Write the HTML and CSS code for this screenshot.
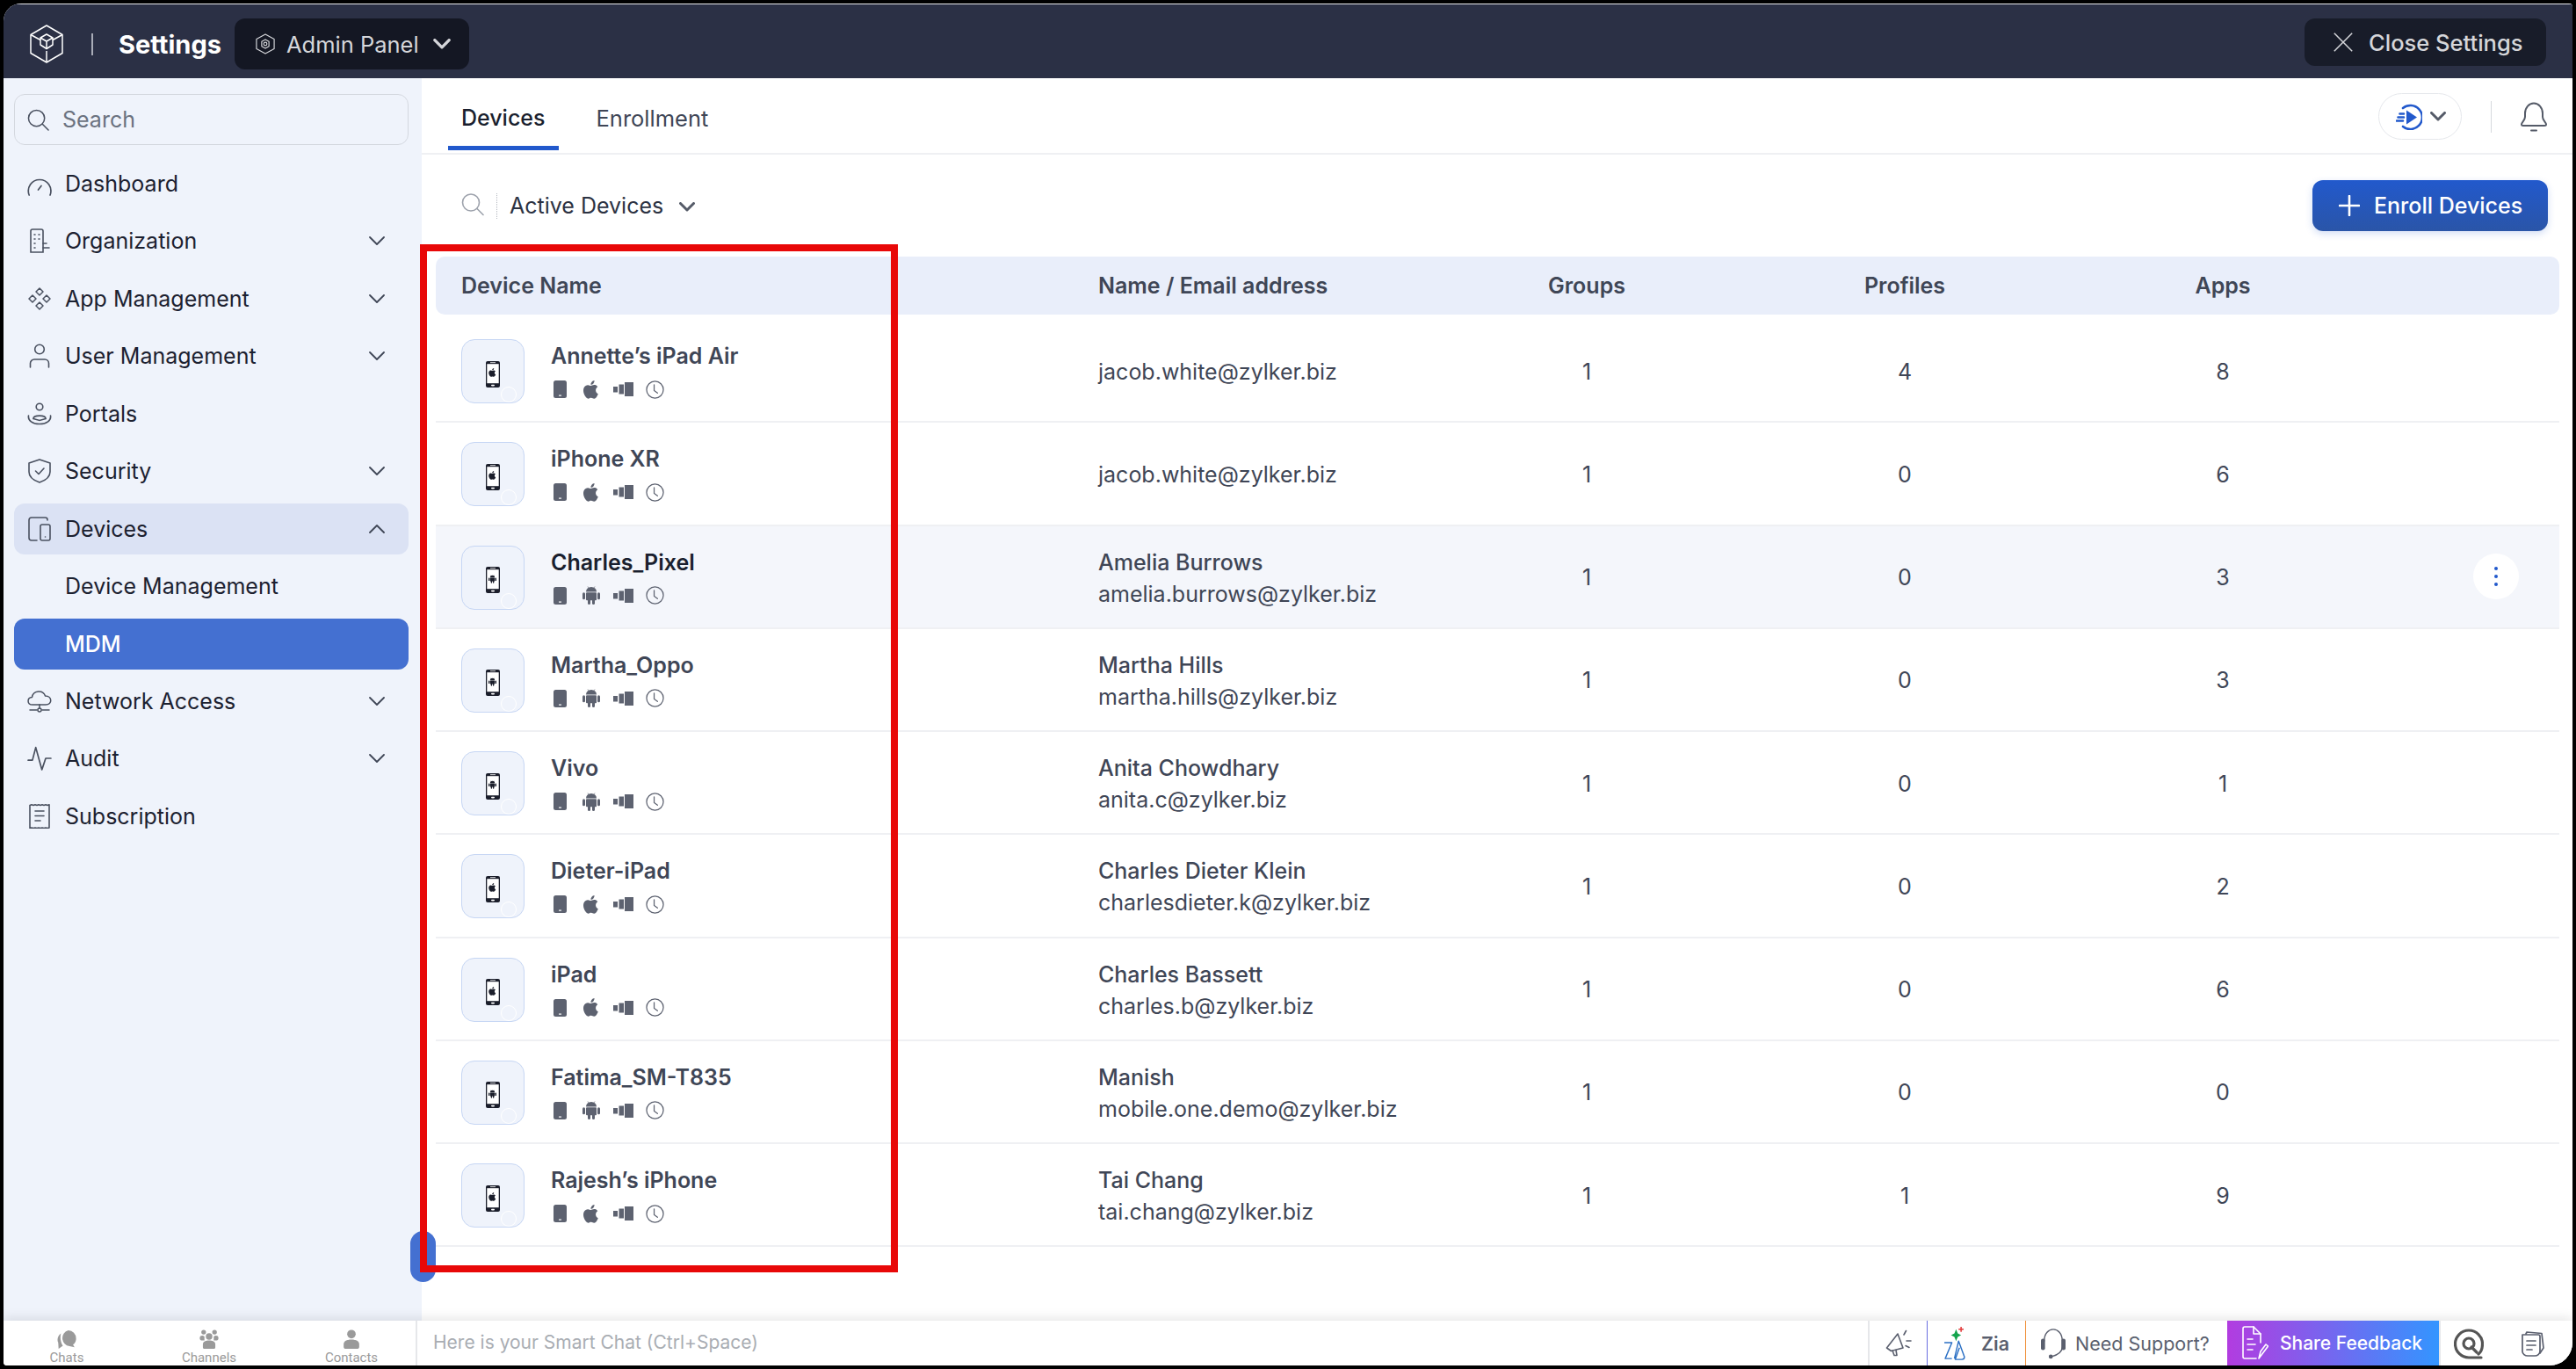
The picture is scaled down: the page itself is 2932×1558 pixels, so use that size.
FILE: index.html
```html
<!DOCTYPE html>
<html lang="en">
<head>
<meta charset="utf-8">
<title>Settings - MDM Devices</title>
<link rel="stylesheet" href="styles.css">
</head>
<body>
<svg class="defs" xmlns="http://www.w3.org/2000/svg">
  <defs>
    <symbol id="i-logo" viewBox="0 0 38 44"><g fill="none" stroke="currentColor" stroke-width="1.5" stroke-linejoin="round"><path d="M19 1 37 11.500V32.500L19 43 1 32.500V11.500Z"/><path d="M1 11.500 12 17.500M37 11.500 26 17.500M19 43V30"/><path d="M19 11 26 15V23L19 27.500 12 23V15Z"/><path d="M12 15 19 19 26 15M19 19V27.500"/></g></symbol>
    <symbol id="i-gearhex" viewBox="0 0 24 26"><g fill="none" stroke="currentColor" stroke-width="1.300" stroke-linejoin="round"><path d="M12 1 23 7V19L12 25 1 19V7Z"/><path d="M12 7.500 16.500 10V16L12 18.500 7.500 16V10Z"/><circle cx="12" cy="13" r="2"/></g></symbol>
    <symbol id="i-search" viewBox="0 0 26 26"><g fill="none" stroke="currentColor" stroke-width="1.600" stroke-linecap="round"><circle cx="11" cy="11" r="9.500"/><path d="M18 18 25 25"/></g></symbol>
    <symbol id="i-gauge" viewBox="0 0 28 20"><g fill="none" stroke="currentColor" stroke-width="1.700" stroke-linecap="round"><path d="M2.200 19A12.800 12.800 0 1 1 26 19"/><path d="M12.500 13 16 8.500"/></g></symbol>
    <symbol id="i-building" viewBox="0 0 24 28"><g fill="none" stroke="currentColor" stroke-width="1.600" stroke-linecap="round"><path d="M2 27V3A2 2 0 0 1 4 1H14A2 2 0 0 1 16 3V27H2Z"/><path d="M6 7H7M11 7H12M6 12H7M11 12H12M6 17H7M6 22H7M16 17H20M16 22H23"/></g></symbol>
    <symbol id="i-apps" viewBox="0 0 26 26"><g fill="none" stroke="currentColor" stroke-width="1.500" stroke-linejoin="round"><path d="M13 1 17 5 13 9 9 5ZM5 9 9 13 5 17 1 13ZM21 9 25 13 21 17 17 13ZM13 17 17 21 13 25 9 21Z"/></g></symbol>
    <symbol id="i-user" viewBox="0 0 24 28"><g fill="none" stroke="currentColor" stroke-width="1.600" stroke-linecap="round"><circle cx="12" cy="6.500" r="5.300"/><path d="M1.500 27V22.500A4.500 4.500 0 0 1 6 18H18A4.500 4.500 0 0 1 22.500 22.500V27"/></g></symbol>
    <symbol id="i-portal" viewBox="0 0 28 26"><g fill="none" stroke="currentColor" stroke-width="1.600" stroke-linecap="round"><circle cx="14" cy="5" r="3.800"/><path d="M7 18.500C7 14 21 14 21 18.500"/><path d="M1.500 15C.5 20.500 6 24.500 14 24.500S27.500 20.500 26.500 15"/><path d="M7 18.500 14 20.500 21 18.500"/></g></symbol>
    <symbol id="i-shield" viewBox="0 0 26 28"><g fill="none" stroke="currentColor" stroke-width="1.600" stroke-linecap="round" stroke-linejoin="round"><path d="M13 1 25 5V15C25 21 19 25 13 27 7 25 1 21 1 15V5Z"/><path d="M8.500 14 12 17.500 18 11"/></g></symbol>
    <symbol id="i-devices" viewBox="0 0 26 28"><g fill="none" stroke="currentColor" stroke-width="1.600" stroke-linecap="round"><path d="M22 4V3.500A2.500 2.500 0 0 0 19.500 1H4A3 3 0 0 0 1 4V24A3 3 0 0 0 4 27H10"/><rect x="14" y="9" width="11" height="18" rx="2"/><path d="M19.500 23H19.600"/></g></symbol>
    <symbol id="i-cloud" viewBox="0 0 28 26"><g fill="none" stroke="currentColor" stroke-width="1.500" stroke-linecap="round" stroke-linejoin="round"><path d="M7 17H6C-.5 17-.5 9 5.500 8.500 6.500 .5 18 -.5 20.500 7 28.500 7 29 17 21 17H7Z"/><path d="M14 17V21M3 23H11M17 23H25"/><circle cx="14" cy="23" r="2"/></g></symbol>
    <symbol id="i-pulse" viewBox="0 0 26 26"><path d="M1 15H5.500L9 1.500 15.500 25 19.500 13H25" fill="none" stroke="currentColor" stroke-width="1.600" stroke-linecap="round" stroke-linejoin="round"/></symbol>
    <symbol id="i-receipt" viewBox="0 0 24 28"><g fill="none" stroke="currentColor" stroke-width="1.600" stroke-linecap="round"><path d="M1 1.500 3 .8 5 1.500 7 .8 9 1.500 11 .8 13 1.500 15 .8 17 1.500 19 .8 21 1.500 23 .8V27 L21 27.500 19 27 17 27.500 15 27 13 27.500 11 27 9 27.500 7 27 5 27.500 3 27 1 27.500Z" stroke-linejoin="round"/><path d="M7 8H17M7 13.500H17M7 19H13"/></g></symbol>
    <symbol id="i-chev" viewBox="0 0 18 10"><path d="M1 1 9 9 17 1" fill="none" stroke="currentColor" stroke-width="1.800" stroke-linecap="round" stroke-linejoin="round"/></symbol>
    <symbol id="i-chevb" viewBox="0 0 18 11"><path d="M1.500 1.500 9 9 16.500 1.500" fill="none" stroke="currentColor" stroke-width="3" stroke-linecap="round" stroke-linejoin="round"/></symbol>
    <symbol id="i-close" viewBox="0 0 22 22"><path d="M.8.800 21.200 21.200M21.200.8.800 21.200" fill="none" stroke="currentColor" stroke-width="1.500"/></symbol>
    <symbol id="i-plus" viewBox="0 0 24 24"><path d="M12 1V23M1 12H23" fill="none" stroke="currentColor" stroke-width="2.600" stroke-linecap="round"/></symbol>
    <symbol id="i-play" viewBox="0 0 30 30"><g fill="none" stroke="currentColor" stroke-width="2.600" stroke-linecap="round"><path d="M8 5A13.500 13.500 0 1 1 8 26"/><path d="M4.500 11.500H9M2.500 15.500H9M1 19.500H8"/></g><path d="M12 7.500 24 15.500 12 23.500Z" fill="currentColor"/></symbol>
    <symbol id="i-bell" viewBox="0 0 30 34"><g fill="none" stroke="currentColor" stroke-width="2" stroke-linecap="round" stroke-linejoin="round"><path d="M5 17V13A10 11.500 0 0 1 25 13V17C25 21 29 23 29 25.500 29 26.500 28 27 27 27H3C2 27 1 26.500 1 25.500 1 23 5 21 5 17Z"/><path d="M12 32.500H18"/></g></symbol>
    <symbol id="i-tablet" viewBox="0 0 15 20"><rect width="15" height="20" rx="2.500" fill="currentColor"/><rect x="6" y="16.500" width="3" height="1.200" fill="#fff"/></symbol>
    <symbol id="i-apple" viewBox="2.500 1.500 19 21"><path fill="currentColor" d="M17.050 12.540c-.03-2.600 2.130-3.850 2.220-3.910-1.210-1.770-3.100-2.010-3.770-2.040-1.600-.16-3.130.94-3.950.94-.81 0-2.070-.92-3.400-.89-1.750.03-3.360 1.020-4.260 2.580-1.820 3.150-.47 7.820 1.300 10.380.87 1.250 1.900 2.650 3.250 2.600 1.310-.05 1.800-.84 3.380-.84 1.570 0 2.020.84 3.400.82 1.400-.03 2.290-1.270 3.150-2.530.99-1.450 1.400-2.860 1.420-2.930-.03-.01-2.720-1.040-2.740-4.180zM14.460 4.900c.72-.87 1.200-2.080 1.070-3.290-1.030.04-2.290.69-3.030 1.550-.66.77-1.240 2-1.090 3.180 1.150.09 2.330-.58 3.050-1.440z"/></symbol>
    <symbol id="i-android" viewBox="0 0 20 21"><g fill="currentColor"><path d="M4 6.500A6 5.500 0 0 1 16 6.500Z"/><rect x="4" y="7.200" width="12" height="9" rx="1"/><rect x="0" y="7.200" width="3" height="8" rx="1.500"/><rect x="17" y="7.200" width="3" height="8" rx="1.500"/><rect x="6" y="14" width="3" height="7" rx="1.500"/><rect x="11" y="14" width="3" height="7" rx="1.500"/></g><path d="M6 .5 7.500 2.500M14 .5 12.500 2.500" stroke="currentColor" stroke-width=".7"/></symbol>
    <symbol id="i-signal" viewBox="0 0 23 16"><g fill="currentColor"><rect x="0" y="5" width="5" height="6.500"/><rect x="6.500" y="2.500" width="5.500" height="11"/><rect x="13" y="0" width="10" height="16"/></g></symbol>
    <symbol id="i-clock" viewBox="0 0 22 22"><g fill="none" stroke="currentColor" stroke-width="1.300" stroke-linecap="round"><circle cx="11" cy="11" r="10"/><path d="M10 5V12L14 15"/></g></symbol>
    <symbol id="i-phone" viewBox="0 0 16 30"><rect width="16" height="30" rx="2" fill="#1b1e2b"/><rect x="1.300" y="3.200" width="13.400" height="22" fill="#fff"/><rect x="5" y="1.300" width="6" height=".8" fill="#fff"/><rect x="6" y="26.800" width="4" height="1.600" rx=".8" fill="#fff"/></symbol>
    <symbol id="i-chats" viewBox="0 0 26 26"><g fill="currentColor"><path d="M15 1A10.500 10.500 0 0 1 25 11.500C25 15 23.500 18 21 19.500L23 23 16.500 21.500A10.500 10.500 0 0 1 15 1Z"/><path d="M5.500 5C1.500 8 0 13 2 17L2.500 25 8 21C5 17 4 10 5.500 5Z"/></g></symbol>
    <symbol id="i-channels" viewBox="0 0 24 26"><g fill="currentColor"><circle cx="5" cy="3.500" r="3"/><circle cx="19" cy="3.500" r="3"/><circle cx="12" cy="9" r="4.200"/><path d="M0 11C0 7.500 4 7.500 6 9L6 14H2C.5 14 0 12.500 0 11ZM24 11C24 7.500 20 7.500 18 9L18 14H22C23.500 14 24 12.500 24 11Z"/><path d="M4 19C4 15 8 14 12 14S20 15 20 19V23C20 24.500 19 25 18 25H6C5 25 4 24.500 4 23Z"/></g></symbol>
    <symbol id="i-contacts" viewBox="0 0 20 26"><g fill="currentColor"><circle cx="10" cy="6" r="5.500"/><path d="M0 19C0 15 4 13 10 13S20 15 20 19V22C20 24 19 25 17 25H3C1 25 0 24 0 22Z"/></g></symbol>
    <symbol id="i-mega" viewBox="0 0 30 32"><g fill="none" stroke="currentColor" stroke-width="1.600" stroke-linecap="round" stroke-linejoin="round"><path d="M1.500 21 14 5 20 21 6.500 24.500Z"/><path d="M8 24 10 29.500H13L12 23.500"/><path d="M21 6 23.500 1.500M24 13H29M23 18.500 27 20.500"/></g></symbol>
    <symbol id="i-zia" viewBox="0 0 26 42"><path d="M1 20H10L2 39H10M13 39 18 18 25 37 C25 39 24 40 22 40H14L19 26" fill="none" stroke="#2a6fc4" stroke-width="1.500" stroke-linejoin="round"/><path d="M15 4 17 9 21 11 17 13 15 18 13 13 9 11 13 9Z" fill="#14a44d"/><path d="M21 1V7M18 4H24" stroke="#e23b3b" stroke-width="1.600"/></symbol>
    <symbol id="i-headset" viewBox="0 0 30 38"><g fill="none" stroke="currentColor" stroke-width="1.500" stroke-linecap="round"><path d="M4 16C4 -3 26 -3 26 16V23C26 29 20 33 13 35"/></g><g fill="currentColor"><rect x="0" y="13" width="5" height="14" rx="2.500"/><rect x="25" y="13" width="5" height="14" rx="2.500"/><circle cx="12" cy="35" r="2.500"/></g></symbol>
    <symbol id="i-doc" viewBox="0 0 30 40"><g fill="none" stroke="currentColor" stroke-width="1.600" stroke-linecap="round" stroke-linejoin="round"><path d="M16 37H3A2 2 0 0 1 1 35V3A2 2 0 0 1 3 1H13L21 9V19"/><path d="M13 1V9H21"/><path d="M6 15H12M6 21H15M6 27H12"/><path d="M19 37 21 29 27 21 29.500 23 23.500 31Z"/></g></symbol>
    <symbol id="i-q" viewBox="0 0 34 36"><g fill="none" stroke="currentColor" stroke-width="3.200" stroke-linecap="round"><path d="M31 34H17A15.500 15.500 0 1 1 32.500 18.500C32.500 24 30.500 28 28 30"/><circle cx="17" cy="18" r="6"/><path d="M20 22 26 28"/></g></symbol>
    <symbol id="i-notes" viewBox="0 0 26 30"><g fill="none" stroke="currentColor" stroke-width="1.700" stroke-linecap="round" stroke-linejoin="round"><path d="M5 4 6 2 23 3.500 25 20 21 26"/><path d="M1 5H19A2 2 0 0 1 21 7V24C21 27 18 29 15 29H7C4 29 1 27 1 24Z"/><path d="M6 12H16M6 17H16M6 22H12"/></g></symbol>
  </defs>
</svg>

<div class="window">
  <header class="topbar">
    <svg class="logo"><use href="#i-logo"/></svg>
    <span class="top-divider"></span>
    <span class="top-title">Settings</span>
    <button class="panel-btn">
      <svg class="panel-icon"><use href="#i-gearhex"/></svg>
      <span>Admin Panel</span>
      <svg class="panel-chev"><use href="#i-chevb"/></svg>
    </button>
    <button class="close-btn">
      <svg class="close-icon"><use href="#i-close"/></svg>
      <span>Close Settings</span>
    </button>
  </header>

  <div class="middle">
    <aside class="sidebar">
      <div class="side-search">
        <svg class="side-search-icon"><use href="#i-search"/></svg>
        <span>Search</span>
      </div>
      <nav class="side-nav">
        <a class="nav-item"><span class="nav-ico"><svg class="ico-gauge"><use href="#i-gauge"/></svg></span>Dashboard</a>
        <a class="nav-item"><span class="nav-ico"><svg class="ico-28"><use href="#i-building"/></svg></span>Organization<svg class="nav-chev"><use href="#i-chev"/></svg></a>
        <a class="nav-item"><span class="nav-ico"><svg class="ico-26"><use href="#i-apps"/></svg></span>App Management<svg class="nav-chev"><use href="#i-chev"/></svg></a>
        <a class="nav-item"><span class="nav-ico"><svg class="ico-28"><use href="#i-user"/></svg></span>User Management<svg class="nav-chev"><use href="#i-chev"/></svg></a>
        <a class="nav-item"><span class="nav-ico"><svg class="ico-28"><use href="#i-portal"/></svg></span>Portals</a>
        <a class="nav-item"><span class="nav-ico"><svg class="ico-28"><use href="#i-shield"/></svg></span>Security<svg class="nav-chev"><use href="#i-chev"/></svg></a>
        <a class="nav-item is-open"><span class="nav-ico"><svg class="ico-28"><use href="#i-devices"/></svg></span>Devices<svg class="nav-chev flip"><use href="#i-chev"/></svg></a>
        <a class="nav-item"><span class="nav-ico"></span>Device Management</a>
        <a class="nav-item is-active"><span class="nav-ico"></span>MDM</a>
        <a class="nav-item"><span class="nav-ico"><svg class="ico-28"><use href="#i-cloud"/></svg></span>Network Access<svg class="nav-chev"><use href="#i-chev"/></svg></a>
        <a class="nav-item"><span class="nav-ico"><svg class="ico-28"><use href="#i-pulse"/></svg></span>Audit<svg class="nav-chev"><use href="#i-chev"/></svg></a>
        <a class="nav-item"><span class="nav-ico"><svg class="ico-28"><use href="#i-receipt"/></svg></span>Subscription</a>
      </nav>
    </aside>

    <main class="content">
      <div class="tabs-row">
        <div class="tabs">
          <a class="tab is-current">Devices</a>
          <a class="tab">Enrollment</a>
        </div>
        <div class="tools">
          <div class="tour-pill">
            <svg class="tour-icon"><use href="#i-play"/></svg>
            <svg class="tour-chev"><use href="#i-chevb"/></svg>
          </div>
          <span class="tools-divider"></span>
          <svg class="bell"><use href="#i-bell"/></svg>
        </div>
      </div>

      <div class="filter-row">
        <svg class="filter-search"><use href="#i-search"/></svg>
        <span class="filter-divider"></span>
        <span class="filter-label">Active Devices</span>
        <svg class="filter-chev"><use href="#i-chevb"/></svg>
        <button class="enroll-btn"><svg class="plus"><use href="#i-plus"/></svg><span>Enroll Devices</span></button>
      </div>

      <div class="table">
        <div class="t-head">
          <div class="c-device">Device Name</div>
          <div>Name / Email address</div>
          <div class="c-num">Groups</div>
          <div class="c-num">Profiles</div>
          <div class="c-num">Apps</div>
          <div></div>
        </div>

        <div class="t-row">
          <div class="c-device dev">
            <span class="thumb"><svg class="phone"><use href="#i-phone"/></svg><svg class="phone-os"><use href="#i-apple"/></svg><span class="ring"></span></span>
            <div class="dev-text"><div class="dev-name">Annette’s iPad Air</div>
              <div class="dev-icons"><svg class="m-tablet"><use href="#i-tablet"/></svg><svg class="m-os"><use href="#i-apple"/></svg><svg class="m-signal"><use href="#i-signal"/></svg><svg class="m-clock"><use href="#i-clock"/></svg></div></div>
          </div>
          <div class="who"><div class="who-mail">jacob.white@zylker.biz</div></div>
          <div class="c-num">1</div><div class="c-num">4</div><div class="c-num">8</div><div></div>
        </div>

        <div class="t-row">
          <div class="c-device dev">
            <span class="thumb"><svg class="phone"><use href="#i-phone"/></svg><svg class="phone-os"><use href="#i-apple"/></svg><span class="ring"></span></span>
            <div class="dev-text"><div class="dev-name">iPhone XR</div>
              <div class="dev-icons"><svg class="m-tablet"><use href="#i-tablet"/></svg><svg class="m-os"><use href="#i-apple"/></svg><svg class="m-signal"><use href="#i-signal"/></svg><svg class="m-clock"><use href="#i-clock"/></svg></div></div>
          </div>
          <div class="who"><div class="who-mail">jacob.white@zylker.biz</div></div>
          <div class="c-num">1</div><div class="c-num">0</div><div class="c-num">6</div><div></div>
        </div>

        <div class="t-row is-hover">
          <div class="c-device dev">
            <span class="thumb"><svg class="phone"><use href="#i-phone"/></svg><svg class="phone-os"><use href="#i-android"/></svg><span class="ring"></span></span>
            <div class="dev-text"><div class="dev-name">Charles_Pixel</div>
              <div class="dev-icons"><svg class="m-tablet"><use href="#i-tablet"/></svg><svg class="m-os"><use href="#i-android"/></svg><svg class="m-signal"><use href="#i-signal"/></svg><svg class="m-clock"><use href="#i-clock"/></svg></div></div>
          </div>
          <div class="who"><div class="who-name">Amelia Burrows</div><div class="who-mail">amelia.burrows@zylker.biz</div></div>
          <div class="c-num">1</div><div class="c-num">0</div><div class="c-num">3</div>
          <div class="c-more"><span class="more-btn"><i></i><i></i><i></i></span></div>
        </div>

        <div class="t-row">
          <div class="c-device dev">
            <span class="thumb"><svg class="phone"><use href="#i-phone"/></svg><svg class="phone-os"><use href="#i-android"/></svg><span class="ring"></span></span>
            <div class="dev-text"><div class="dev-name">Martha_Oppo</div>
              <div class="dev-icons"><svg class="m-tablet"><use href="#i-tablet"/></svg><svg class="m-os"><use href="#i-android"/></svg><svg class="m-signal"><use href="#i-signal"/></svg><svg class="m-clock"><use href="#i-clock"/></svg></div></div>
          </div>
          <div class="who"><div class="who-name">Martha Hills</div><div class="who-mail">martha.hills@zylker.biz</div></div>
          <div class="c-num">1</div><div class="c-num">0</div><div class="c-num">3</div><div></div>
        </div>

        <div class="t-row">
          <div class="c-device dev">
            <span class="thumb"><svg class="phone"><use href="#i-phone"/></svg><svg class="phone-os"><use href="#i-android"/></svg><span class="ring"></span></span>
            <div class="dev-text"><div class="dev-name">Vivo</div>
              <div class="dev-icons"><svg class="m-tablet"><use href="#i-tablet"/></svg><svg class="m-os"><use href="#i-android"/></svg><svg class="m-signal"><use href="#i-signal"/></svg><svg class="m-clock"><use href="#i-clock"/></svg></div></div>
          </div>
          <div class="who"><div class="who-name">Anita Chowdhary</div><div class="who-mail">anita.c@zylker.biz</div></div>
          <div class="c-num">1</div><div class="c-num">0</div><div class="c-num">1</div><div></div>
        </div>

        <div class="t-row">
          <div class="c-device dev">
            <span class="thumb"><svg class="phone"><use href="#i-phone"/></svg><svg class="phone-os"><use href="#i-apple"/></svg><span class="ring"></span></span>
            <div class="dev-text"><div class="dev-name">Dieter-iPad</div>
              <div class="dev-icons"><svg class="m-tablet"><use href="#i-tablet"/></svg><svg class="m-os"><use href="#i-apple"/></svg><svg class="m-signal"><use href="#i-signal"/></svg><svg class="m-clock"><use href="#i-clock"/></svg></div></div>
          </div>
          <div class="who"><div class="who-name">Charles Dieter Klein</div><div class="who-mail">charlesdieter.k@zylker.biz</div></div>
          <div class="c-num">1</div><div class="c-num">0</div><div class="c-num">2</div><div></div>
        </div>

        <div class="t-row">
          <div class="c-device dev">
            <span class="thumb"><svg class="phone"><use href="#i-phone"/></svg><svg class="phone-os"><use href="#i-apple"/></svg><span class="ring"></span></span>
            <div class="dev-text"><div class="dev-name">iPad</div>
              <div class="dev-icons"><svg class="m-tablet"><use href="#i-tablet"/></svg><svg class="m-os"><use href="#i-apple"/></svg><svg class="m-signal"><use href="#i-signal"/></svg><svg class="m-clock"><use href="#i-clock"/></svg></div></div>
          </div>
          <div class="who"><div class="who-name">Charles Bassett</div><div class="who-mail">charles.b@zylker.biz</div></div>
          <div class="c-num">1</div><div class="c-num">0</div><div class="c-num">6</div><div></div>
        </div>

        <div class="t-row">
          <div class="c-device dev">
            <span class="thumb"><svg class="phone"><use href="#i-phone"/></svg><svg class="phone-os"><use href="#i-android"/></svg><span class="ring"></span></span>
            <div class="dev-text"><div class="dev-name">Fatima_SM-T835</div>
              <div class="dev-icons"><svg class="m-tablet"><use href="#i-tablet"/></svg><svg class="m-os"><use href="#i-android"/></svg><svg class="m-signal"><use href="#i-signal"/></svg><svg class="m-clock"><use href="#i-clock"/></svg></div></div>
          </div>
          <div class="who"><div class="who-name">Manish</div><div class="who-mail">mobile.one.demo@zylker.biz</div></div>
          <div class="c-num">1</div><div class="c-num">0</div><div class="c-num">0</div><div></div>
        </div>

        <div class="t-row">
          <div class="c-device dev">
            <span class="thumb"><svg class="phone"><use href="#i-phone"/></svg><svg class="phone-os"><use href="#i-apple"/></svg><span class="ring"></span></span>
            <div class="dev-text"><div class="dev-name">Rajesh’s iPhone</div>
              <div class="dev-icons"><svg class="m-tablet"><use href="#i-tablet"/></svg><svg class="m-os"><use href="#i-apple"/></svg><svg class="m-signal"><use href="#i-signal"/></svg><svg class="m-clock"><use href="#i-clock"/></svg></div></div>
          </div>
          <div class="who"><div class="who-name">Tai Chang</div><div class="who-mail">tai.chang@zylker.biz</div></div>
          <div class="c-num">1</div><div class="c-num">1</div><div class="c-num">9</div><div></div>
        </div>
      </div>
    </main>

    <span class="side-handle"></span>
    <span class="red-box"></span>
  </div>

  <footer class="bottombar">
    <div class="bb-left">
      <div class="bb-tab"><svg class="bb-chats"><use href="#i-chats"/></svg><span>Chats</span></div>
      <div class="bb-tab"><svg class="bb-channels"><use href="#i-channels"/></svg><span>Channels</span></div>
      <div class="bb-tab"><svg class="bb-contacts"><use href="#i-contacts"/></svg><span>Contacts</span></div>
    </div>
    <div class="bb-input">Here is your Smart Chat (Ctrl+Space)</div>
    <div class="bb-cell bb-mega"><svg class="mega"><use href="#i-mega"/></svg></div>
    <div class="bb-cell bb-zia"><svg class="zia"><use href="#i-zia"/></svg><span>Zia</span></div>
    <div class="bb-cell bb-support"><svg class="headset"><use href="#i-headset"/></svg><span>Need Support?</span></div>
    <div class="bb-cell bb-feedback"><svg class="doc"><use href="#i-doc"/></svg><span>Share Feedback</span></div>
    <div class="bb-cell bb-q"><svg class="q"><use href="#i-q"/></svg></div>
    <div class="bb-cell bb-notes"><svg class="notes"><use href="#i-notes"/></svg></div>
  </footer>
</div>
</body>
</html>
```

FILE: styles.css
```css
* { box-sizing: border-box; }
html, body { margin: 0; height: 100%; }
body {
  background: #000;
  padding: 4px;
  font-family: Inter, "Noto Sans", sans-serif;
  color: #3f4656;
  overflow: hidden;
}
svg { display: block; flex: none; }
.defs { display: none; }
button { font: inherit; border: 0; }

.window {
  width: 2924px;
  height: 1550px;
  display: flex;
  flex-direction: column;
  background: #fff;
  border-radius: 20px 4px 26px 4px;
  overflow: hidden;
}

/* top bar */
.topbar {
  flex: none;
  height: 85px;
  display: flex;
  align-items: center;
  padding: 6px 30px 0;
  background: #2b3045;
  border-top: 1px solid #e8e9ec;
  color: #fff;
}
.logo { width: 38px; height: 44px; color: #fff; }
.top-divider { width: 2px; height: 25px; background: #a9acb7; margin-left: 32px; }
.top-title { margin-left: 29px; font-size: 29px; font-weight: 700; }
.panel-btn {
  margin-left: 15px;
  width: 267px;
  height: 58px;
  display: flex;
  align-items: center;
  padding-left: 24px;
  background: #141723;
  border-radius: 12px;
  color: #d5d6da;
  font-size: 25.500px;
}
.panel-icon { width: 22px; height: 26px; margin-right: 13px; }
.panel-chev { width: 20px; height: 12px; margin-left: 16px; }
.close-btn {
  margin-left: auto;
  width: 275px;
  height: 54px;
  margin-top: -4px;
  display: flex;
  align-items: center;
  padding-left: 33px;
  background: #181c29;
  border-radius: 12px;
  color: #d5d6da;
  font-size: 25.500px;
  font-weight: 500;
}
.close-icon { width: 22px; height: 22px; margin-right: 18px; }

/* middle */
.middle { flex: 1; min-height: 0; display: flex; position: relative; }

.sidebar {
  flex: none;
  width: 476px;
  padding: 18px 15px 0 12px;
  background: #eff3fb;
}
.side-search {
  height: 58px;
  display: flex;
  align-items: center;
  padding-left: 14px;
  border: 1.500px solid #d4d8df;
  border-radius: 12px;
  color: #6b7280;
  font-size: 25px;
}
.side-search-icon { width: 25px; height: 25px; color: #4a5160; margin-right: 15px; }
.side-nav { margin-top: 15px; display: flex; flex-direction: column; gap: 7.450px; }
.nav-item {
  height: 58px;
  display: flex;
  align-items: center;
  padding-right: 27px;
  border-radius: 12px;
  color: #1c2130;
  font-size: 25px;
}
.nav-ico { width: 58px; height: 30px; display: flex; align-items: center; justify-content: center; color: #4a5160; }
.ico-gauge { width: 28px; height: 20px; margin-top: 8px; }
.ico-28 { width: 28px; height: 28px; }
.ico-26 { width: 26px; height: 26px; }
.nav-chev { margin-left: auto; width: 18px; height: 10px; color: #3f4656; }
.nav-chev.flip { transform: rotate(180deg); }
.is-open { background: #dbe2f4; }
.is-active { background: #4470d1; color: #fff; font-weight: 500; }

/* content */
.content { flex: 1; min-width: 0; padding: 0 15px 0 16px; background: #fff; }
.tabs-row {
  height: 87px;
  margin: 0 -15px 0 -16px;
  padding-left: 30px;
  padding-right: 29px;
  display: flex;
  align-items: flex-end;
  justify-content: space-between;
  border-bottom: 2px solid #eff0f3;
}
.tabs { display: flex; gap: 28px; }
.tab {
  height: 74px;
  padding: 22px 15px 0;
  font-size: 25.500px;
  color: #3f4656;
  margin-bottom: 3px;
}
.tab.is-current { color: #1a1f2e; font-weight: 500; font-size: 25px; border-bottom: 5px solid #2259cc; }
.tools { align-self: center; display: flex; align-items: center; margin-top: 2px; }
.tour-pill {
  width: 95px;
  height: 53px;
  display: flex;
  align-items: center;
  padding-left: 19px;
  border: 1.500px solid #e5e7eb;
  border-radius: 27px;
}
.tour-icon { width: 30px; height: 30px; color: #2259cc; }
.tour-chev { width: 18px; height: 11px; margin-left: 9px; color: #555b68; }
.tools-divider { width: 1.500px; height: 36px; background: #d5d8dd; margin-left: 33px; margin-right: 33px; }
.bell { width: 30px; height: 34px; color: #555b68; }

.filter-row {
  height: 116px;
  display: flex;
  align-items: center;
  padding: 0 13px 0 29px;
}
.filter-search { width: 26px; height: 27px; color: #9ca1ab; margin-top: -3px; }
.filter-divider { height: 29px; border-left: 1.500px dotted #b5b9c1; margin-left: 14px; }
.filter-label { margin-left: 14px; font-size: 25px; color: #2c3242; }
.filter-chev { width: 18px; height: 11px; margin-left: 18px; margin-top: 3px; color: #555b68; }
.enroll-btn {
  margin-left: auto;
  width: 268px;
  height: 58px;
  display: flex;
  align-items: center;
  padding-left: 30px;
  border-radius: 12px;
  background: linear-gradient(#2259cc, #2a55a8);
  box-shadow: 0 3px 8px rgba(34, 89, 204, .2);
  color: #fff;
  font-size: 25px;
  font-weight: 500;
}
.plus { width: 24px; height: 24px; margin-right: 16px; }

/* table */
.table { display: flex; flex-direction: column; }
.t-head, .t-row {
  display: grid;
  grid-template-columns: 754px 410px 292px 432px 292px 1fr;
  align-items: center;
  font-size: 25px;
}
.t-head {
  height: 66px;
  margin-bottom: 6px;
  background: #e9eefa;
  border-radius: 10px;
  font-weight: 600;
  color: #3f4656;
}
.t-row {
  height: 117.250px;
  border-bottom: 2px solid #eff0f3;
  color: #3f4656;
}
.is-hover { background: #f4f6fb; }
.is-hover .dev-name { color: #1a1f2e; }
.c-device { padding-left: 29px; }
.c-num { text-align: center; }
.t-row .c-num { padding-top: 2px; }
.dev { display: flex; align-items: center; gap: 30px; }
.thumb {
  flex: none;
  position: relative;
  width: 72px;
  height: 73px;
  margin-top: 2px;
  display: flex;
  align-items: center;
  justify-content: center;
  background: #eff3fb;
  border: 1.500px solid #c6d6f4;
  border-radius: 15px;
  overflow: hidden;
}
.phone { width: 16px; height: 30px; margin-top: 6px; }
.phone-os { position: absolute; left: 30px; top: 32px; width: 9px; height: 10px; color: #1b1e2b; }
.ring {
  position: absolute;
  left: 44px;
  top: 53px;
  width: 18px;
  height: 18px;
  border: 1.500px solid #fff;
  border-radius: 50%;
}
.dev-text { padding-bottom: 1px; }
.dev-name { font-size: 25px; font-weight: 600; line-height: 34px; color: #3f4656; }
.dev-icons { display: flex; align-items: center; margin-top: 10px; height: 22px; color: #5d6270; padding-left: 3px; }
.m-tablet { width: 15px; height: 20px; margin-right: 18px; }
.m-os { width: 20px; height: 21px; margin-right: 15px; }
.m-signal { width: 23px; height: 16px; margin-right: 14px; }
.m-clock { width: 21px; height: 21px; }
.who { padding-top: 3px; }
.who-name { font-weight: 500; line-height: 36px; color: #3f4656; }
.who-mail { line-height: 36px; }
.c-more { display: flex; justify-content: flex-end; padding-right: 46px; }
.more-btn {
  width: 52px;
  height: 52px;
  border-radius: 50%;
  background: #fff;
  display: flex;
  flex-direction: column;
  align-items: center;
  justify-content: center;
  gap: 5px;
}
.more-btn i { width: 4px; height: 4px; border-radius: 50%; background: #2259cc; }

/* overlays */
.side-handle {
  position: absolute;
  left: 463px;
  top: 1312px;
  width: 29px;
  height: 58px;
  border-radius: 15px;
  background: #4470d1;
}
.red-box {
  position: absolute;
  left: 474px;
  top: 189px;
  width: 544px;
  height: 1170px;
  border: 8px solid #e80808;
}

/* bottom bar */
.bottombar {
  flex: none;
  height: 51px;
  display: flex;
  align-items: stretch;
  background: #fff;
  position: relative;
  box-shadow: 0 -3px 12px rgba(0, 0, 0, .1);
}
.bb-left {
  flex: none;
  width: 471px;
  display: flex;
  border-right: 2px solid #e6e7ea;
}
.bb-tab {
  flex: none;
  width: 162px;
  display: flex;
  flex-direction: column;
  align-items: center;
  padding-top: 10px;
  color: #9a9a9a;
  font-size: 15px;
  line-height: 19px;
  font-family: Roboto, sans-serif;
}
.bb-tab:first-child { margin-left: -9px; }
.bb-chats { width: 26px; height: 23px; }
.bb-channels { width: 24px; height: 23px; }
.bb-contacts { width: 20px; height: 23px; }
.bb-input {
  flex: 1;
  display: flex;
  align-items: center;
  padding-left: 18px;
  padding-bottom: 2px;
  color: #a9adb3;
  font-size: 21px;
}
.bb-cell { flex: none; display: flex; align-items: center; color: #5a5f6e; font-size: 21.500px; }
.bb-mega { width: 68px; padding-left: 18px; border-left: 2px solid #e6e7ea; border-right: 1.500px solid #6a6ee0; }
.mega { width: 30px; height: 32px; }
.bb-zia { width: 112px; padding-left: 18px; border-right: 1.500px solid #f0913c; font-weight: 600; }
.zia { width: 25px; height: 40px; margin-right: 18px; }
.bb-support { width: 229px; padding-left: 17px; }
.headset { width: 28px; height: 38px; margin-right: 11px; }
.bb-feedback {
  width: 241px;
  padding-left: 17px;
  background: linear-gradient(90deg, #b23ce0, #3395ff);
  color: #fff;
  font-size: 21px;
  font-weight: 500;
}
.doc { width: 30px; height: 40px; margin-right: 13px; }
.bb-q { width: 80px; padding-left: 15px; border-left: 2px solid #e6e7ea; }
.q { width: 34px; height: 36px; color: #555; }
.bb-notes { width: 72px; padding-left: 14px; }
.notes { width: 26px; height: 30px; }
```
